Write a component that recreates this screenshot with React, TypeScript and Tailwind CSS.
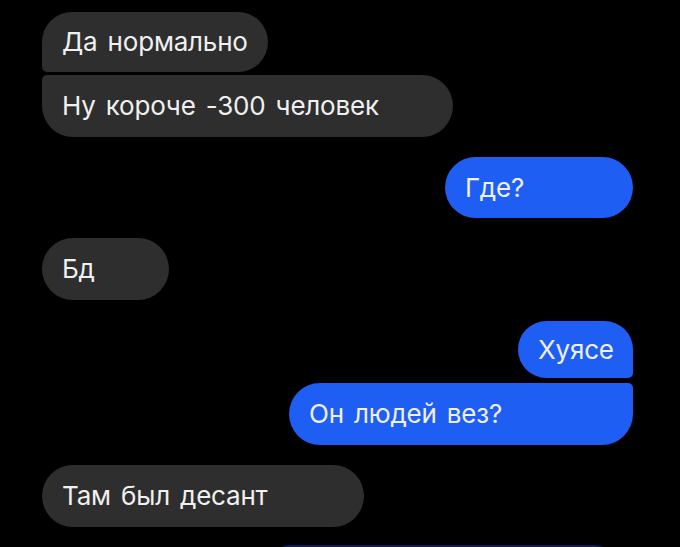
import React from 'react';

type Msg = {
  text: string;
  side: 'left' | 'right';
  width: string;
  height: string;
  top: string;
  corners: string;
};

const messages: Msg[] = [
  { text: 'Да нормально', side: 'left', width: 'w-[226px]', height: 'h-[60px]', top: 'mt-[12px]', corners: 'rounded-[30px] rounded-bl-[5px]' },
  { text: 'Ну короче -300 человек', side: 'left', width: 'w-[411px]', height: 'h-[62px]', top: 'mt-[3px]', corners: 'rounded-[31px] rounded-tl-[5px]' },
  { text: 'Где?', side: 'right', width: 'w-[188px]', height: 'h-[61px]', top: 'mt-[20px]', corners: 'rounded-[31px]' },
  { text: 'Бд', side: 'left', width: 'w-[127px]', height: 'h-[62px]', top: 'mt-[20px]', corners: 'rounded-[31px]' },
  { text: 'Хуясе', side: 'right', width: 'w-[115px]', height: 'h-[57px]', top: 'mt-[21px]', corners: 'rounded-[29px] rounded-br-[5px]' },
  { text: 'Он людей вез?', side: 'right', width: 'w-[344px]', height: 'h-[62px]', top: 'mt-[5px]', corners: 'rounded-[31px] rounded-tr-[5px]' },
  { text: 'Там был десант', side: 'left', width: 'w-[322px]', height: 'h-[62px]', top: 'mt-[20px]', corners: 'rounded-[31px]' },
];

function Bubble({ m }: { m: Msg }) {
  const isLeft = m.side === 'left';
  return (
    <div className={`flex ${isLeft ? 'justify-start pl-[42px]' : 'justify-end pr-[47px]'} ${m.top}`}>
      <div
        className={`${m.width} ${m.height} ${m.corners} flex items-center pl-[20px] ${
          isLeft ? 'bg-[#2e2e2e]' : 'bg-[#1e5ef3]'
        }`}
      >
        <span className="text-[26px] text-[#f0f0f0] leading-none tracking-[-0.2px] [word-spacing:3px]">{m.text}</span>
      </div>
    </div>
  );
}

export default function App() {
  return (
    <div
      className="w-[680px] h-[547px] bg-black overflow-hidden flex flex-col"
      style={{ fontFamily: 'Inter, Roboto, "Noto Sans", sans-serif' }}
    >
      {messages.map((m, i) => (
        <Bubble key={i} m={m} />
      ))}
      <div className="flex justify-start pl-[270px] mt-[18px]">
        <div className="w-[345px] h-[40px] rounded-t-[20px] bg-[#121a55]" />
      </div>
    </div>
  );
}
